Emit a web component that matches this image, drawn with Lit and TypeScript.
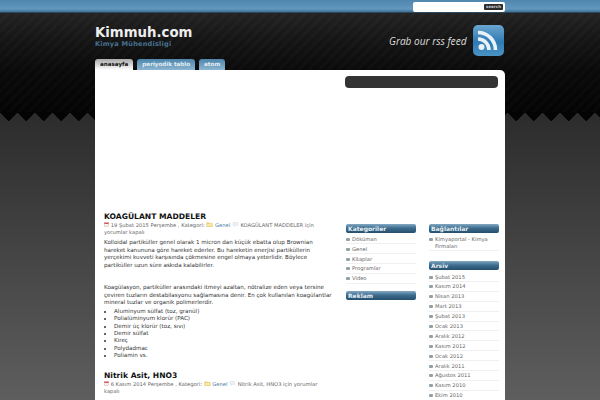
import { LitElement, html, css, svg } from "lit";
import { customElement } from "lit/decorators.js";

const cal = svg`<svg class="ic" viewBox="0 0 8 8"><rect x="0.5" y="1" width="7" height="6.5" fill="#f4f0ee" stroke="#c9a5a5" stroke-width=".6"/><rect x="0.5" y="1" width="7" height="2.2" fill="#d8555f"/></svg>`;
const folder = svg`<svg class="ic f" viewBox="0 0 11 9"><path d="M.5 1.5h4l1 1h5v6h-10z" fill="#f3d26e" stroke="#cfae55" stroke-width=".6"/><rect x="1.5" y="3.5" width="8" height="4" fill="#fbe9a8"/></svg>`;
const bubble = svg`<svg class="ic f" viewBox="0 0 10 9"><path d="M1 1h8v5H5L3 8V6H1z" fill="#f2f4f6" stroke="#c4ccd4" stroke-width=".7"/></svg>`;

@customElement("app-root")
export class AppRoot extends LitElement {
  static styles = css`
    :host { display: block; width: 600px; height: 400px; overflow: hidden; font-family: "DejaVu Sans", sans-serif; color: #222;
      background:
        repeating-linear-gradient(135deg, rgba(255,255,255,.014) 0 3px, rgba(0,0,0,.03) 3px 7px) 0 0 / 100% 112px no-repeat,
        conic-gradient(from -45deg at 50% 100%, #040404 0 90deg, transparent 90deg) 0 112px / 17.5px 9px repeat-x,
        linear-gradient(#242424 13px, #181818 35px, #0a0a0a 70px, #040404 112px, #2c2c2c 112px, #2e2e2e 125px, #5e5e5e 400px); }
    .top { height: 13px; box-sizing: border-box; background: linear-gradient(#4f86ae, #6298bf 75%, #3f6f90); border-bottom: 1px solid #2d4a60; display: flex; justify-content: flex-end; padding: 2px 95px 0 0; }
    .search { width: 92px; height: 10px; box-sizing: border-box; background: #fff; border-radius: 2px; display: flex; justify-content: flex-end; align-items: center; padding-right: 2px; flex: none; }
    .search span { width: 19px; height: 6px; background: #2e2e2e; border-radius: 1px; color: #ccc; font-size: 4px; line-height: 6px; font-weight: bold; text-align: center; }
    .wrap { width: 410px; margin-left: 95px; }
    .head { height: 46px; display: flex; justify-content: space-between; }
    h1 { margin: 12px 0 0; font-size: 13.3px; line-height: 15px; font-weight: bold; color: #eee; }
    .tag { font-size: 6.6px; line-height: 9px; font-weight: bold; color: #47708f; letter-spacing: .2px; }
    .rss { display: flex; align-items: center; gap: 6.5px; height: 31px; margin-top: 12px; padding-right: 1px; }
    .rss i { font-family: "Open Sans", sans-serif; font-size: 10.1px; color: #ddd; }
    .rss svg { width: 31px; height: 31px; display: block; }
    .tabs { display: flex; gap: 4px; height: 11px; }
    .tab { height: 11px; line-height: 11px; font-size: 5.6px; font-weight: bold; padding: 0 5px; border-radius: 3px 3px 0 0; color: #e4eef5; background: linear-gradient(#4d85ab, #8cb5d1); }
    .tab.on { color: #111; background: linear-gradient(#aaa, #fff); }
    .page { background: #fff; height: 330px; border-radius: 0 5px 0 0; display: flex; overflow: hidden; }
    .main { width: 230px; padding-left: 9px; margin-right: 11px; flex: none; }
    .post { font-size: 5.6px; line-height: 7.55px; color: #333; }
    h2 { margin: 0; font-size: 7.6px; line-height: 9px; color: #111; font-weight: bold; }
    .first { margin-top: 141.5px; }
    .meta { font-size: 5.2px; line-height: 7.4px; color: #666; margin-top: 1px; padding-right: 9px; }
    .ic { width: 5px; height: 5px; vertical-align: -.5px; }
    .ic.f { width: 7px; }
    .blue { color: #4b7ea5; }
    p { margin: 2.7px 0 0; }
    p + p { margin-top: 14.8px; }
    ul { margin: 1.3px 0 0; padding: 0 0 0 10px; }
    li { line-height: 7.4px; height: 7.4px; }
    .second { margin-top: 11px; }
    .side { flex: 1; padding: 6px 7px 0 0; min-width: 0; }
    .bar { height: 12px; background: #333; border-radius: 4px; }
    .cols { display: flex; gap: 13px; margin: 136px 0 0 1px; }
    .col { width: 70px; flex: none; }
    .w { height: 9px; line-height: 9px; font-size: 6px; font-weight: bold; color: #e8f0f5; padding-left: 2px; border-radius: 2px; background: linear-gradient(#82a9c3, #3e6d8f 45%, #244f6d); }
    .list { margin: 1.3px 0 9.4px; }
    .list.k { margin-bottom: 7.6px; }
    .list.a { margin-top: 2.5px; }
    .list div { color: #666; font-size: 5.2px; line-height: 7px; padding: 1.5px 0 .4px 6px; border-bottom: 1px solid #f0f0f0; position: relative; }
    .list div::before { content: ""; position: absolute; left: 0; top: 3.5px; width: 4px; height: 3px; background: #93a0a8; border-radius: 1px; }
  `;

  render() {
    const kat = ["Döküman", "Genel", "Kitaplar", "Programlar", "Video"];
    const ars = ["Şubat 2015", "Kasım 2014", "Nisan 2013", "Mart 2013", "Şubat 2013", "Ocak 2013", "Aralık 2012", "Kasım 2012", "Ocak 2012", "Aralık 2011", "Ağustos 2011", "Kasım 2010", "Ekim 2010"];
    return html`
      <div class="top"><div class="search"><span>search</span></div></div>
      <div class="wrap">
        <div class="head">
          <div><h1>Kimmuh.com</h1><div class="tag">Kimya Mühendisligi</div></div>
          <div class="rss"><i>Grab our rss feed</i>
            <svg viewBox="0 0 31 31"><defs><linearGradient id="g" x1="0" y1="0" x2="0" y2="1"><stop offset="0" stop-color="#6aa5d0"/><stop offset=".55" stop-color="#2f7ab2"/><stop offset="1" stop-color="#4a93c4"/></linearGradient></defs>
              <rect width="31" height="31" rx="5" fill="url(#g)"/>
              <circle cx="8.5" cy="22" r="3" fill="#e8f2f8"/>
              <path d="M5 14A11 11 0 0 1 16 25M5 7.5A17.5 17.5 0 0 1 22.5 25" fill="none" stroke="#e8f2f8" stroke-width="3.6"/>
            </svg></div>
        </div>
        <div class="tabs"><div class="tab on">anasayfa</div><div class="tab">periyodik tablo</div><div class="tab">atom</div></div>
        <div class="page">
          <div class="main"><div class="post">
            <div class="first"><h2>KOAGÜLANT MADDELER</h2>
              <div class="meta">${cal} 19 Şubat 2015 Perşembe , Kategori: ${folder} <span class="blue">Genel</span> ${bubble} KOAGÜLANT MADDELER için yorumlar kapalı</div>
              <p>Kolloidal partiküller genel olarak 1 micron dan küçük ebatta olup Brownian hareket kanununa göre hareket ederler. Bu hareketin enerjisi partiküllerin yerçekimi kuvveti karşısında çökmesine engel olmaya yeterlidir. Böylece partiküller uzun süre askıda kalabilirler.</p>
              <p>Koagülasyon, partiküller arasındaki itmeyi azaltan, nötralize eden veya tersine çeviren tuzların destabilasyonu sağlamasına denir. En çok kullanılan koagülantlar mineral tuzlar ve organik polimerlerdir.</p>
              <ul><li>Aluminyum sülfat (toz, granül)</li><li>Polialüminyum klorür (PAC)</li><li>Demir üç klorür (toz, sıvı)</li><li>Demir sülfat</li><li>Kireç</li><li>Polydadmac</li><li>Poliamin vs.</li></ul>
            </div>
            <div class="second"><h2>Nitrik Asit, HNO3</h2>
              <div class="meta">${cal} 6 Kasım 2014 Perşembe , Kategori: ${folder} <span class="blue">Genel</span> ${bubble} Nitrik Asit, HNO3 için yorumlar kapalı</div>
            </div>
          </div></div>
          <div class="side">
            <div class="bar"></div>
            <div class="cols">
              <div class="col">
                <div class="w">Kategoriler</div>
                <div class="list k">${kat.map((k) => html`<div>${k}</div>`)}</div>
                <div class="w">Reklam</div>
              </div>
              <div class="col">
                <div class="w">Bağlantılar</div>
                <div class="list"><div>Kimyaportal - Kimya Firmaları</div></div>
                <div class="w">Arsiv</div>
                <div class="list a">${ars.map((k) => html`<div>${k}</div>`)}</div>
              </div>
            </div>
          </div>
        </div>
      </div>`;
  }
}
